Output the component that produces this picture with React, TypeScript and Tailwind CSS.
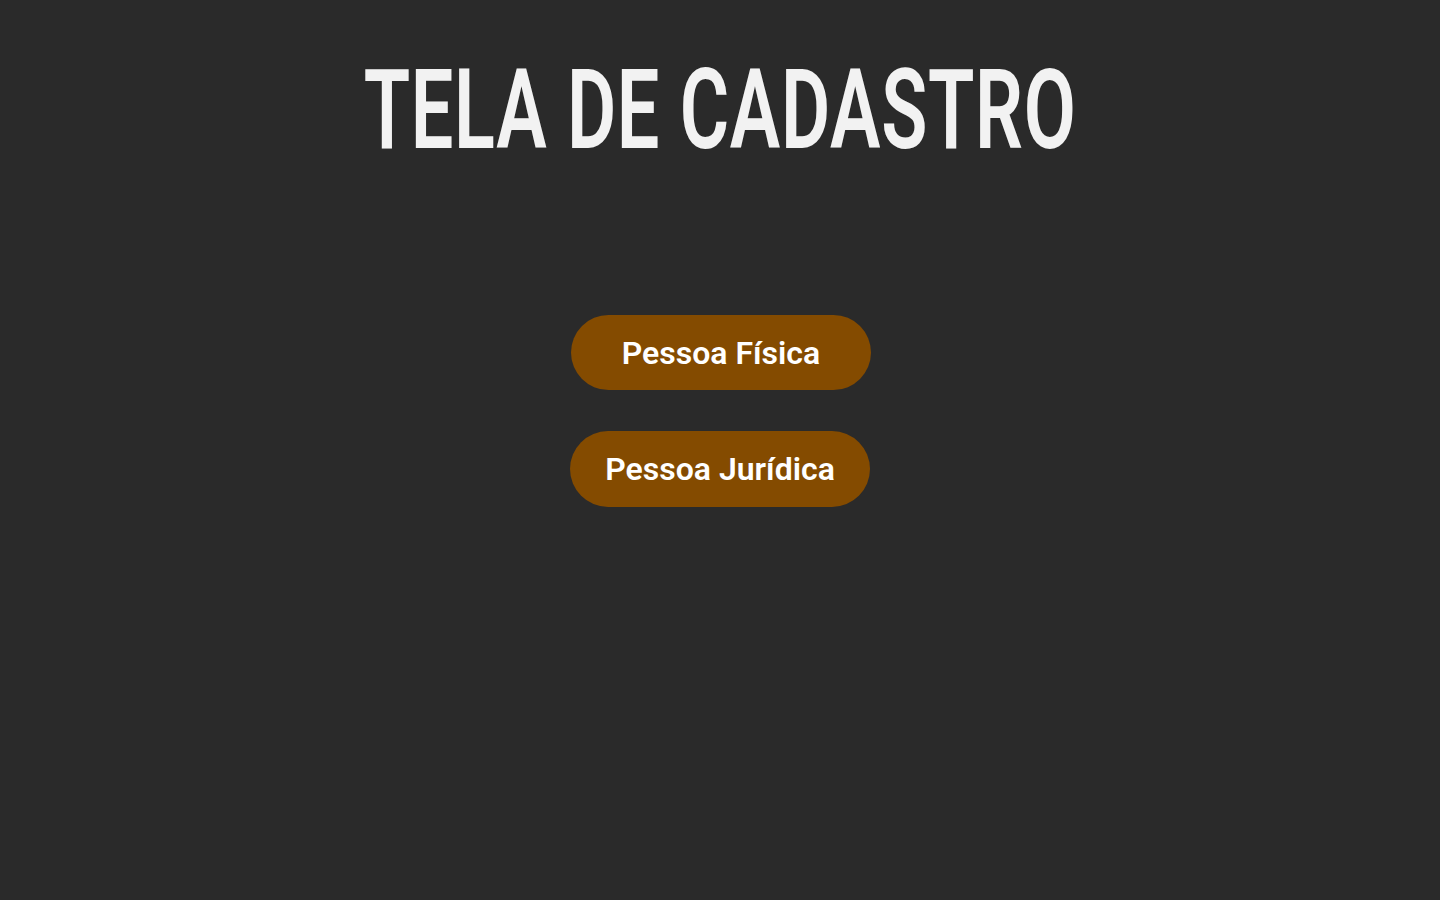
export default function App() {
  return (
    <div className="min-h-screen w-full bg-[#2a2a2a] flex flex-col items-center">
      <h1 className="mt-[50px] h-[120px] flex items-center justify-center">
        <span
          className="inline-block origin-center scale-x-[0.675] text-[112px] leading-none font-semibold tracking-[1px] text-[#f2f2f2] whitespace-nowrap"
          style={{ fontFamily: 'Roboto, "Liberation Sans", sans-serif' }}
        >
          TELA DE CADASTRO
        </span>
      </h1>

      <div className="mt-[145px] flex flex-col items-center gap-[41px]">
        <button
          type="button"
          className="w-[300px] h-[75px] rounded-full bg-[#844b00] text-white text-[32px] font-semibold translate-x-[1px]"
          style={{ fontFamily: 'Roboto, sans-serif' }}
        >
          Pessoa Física
        </button>
        <button
          type="button"
          className="w-[300px] h-[76px] rounded-full bg-[#844b00] text-white text-[32px] font-semibold"
          style={{ fontFamily: 'Roboto, sans-serif' }}
        >
          Pessoa Jurídica
        </button>
      </div>
    </div>
  )
}
